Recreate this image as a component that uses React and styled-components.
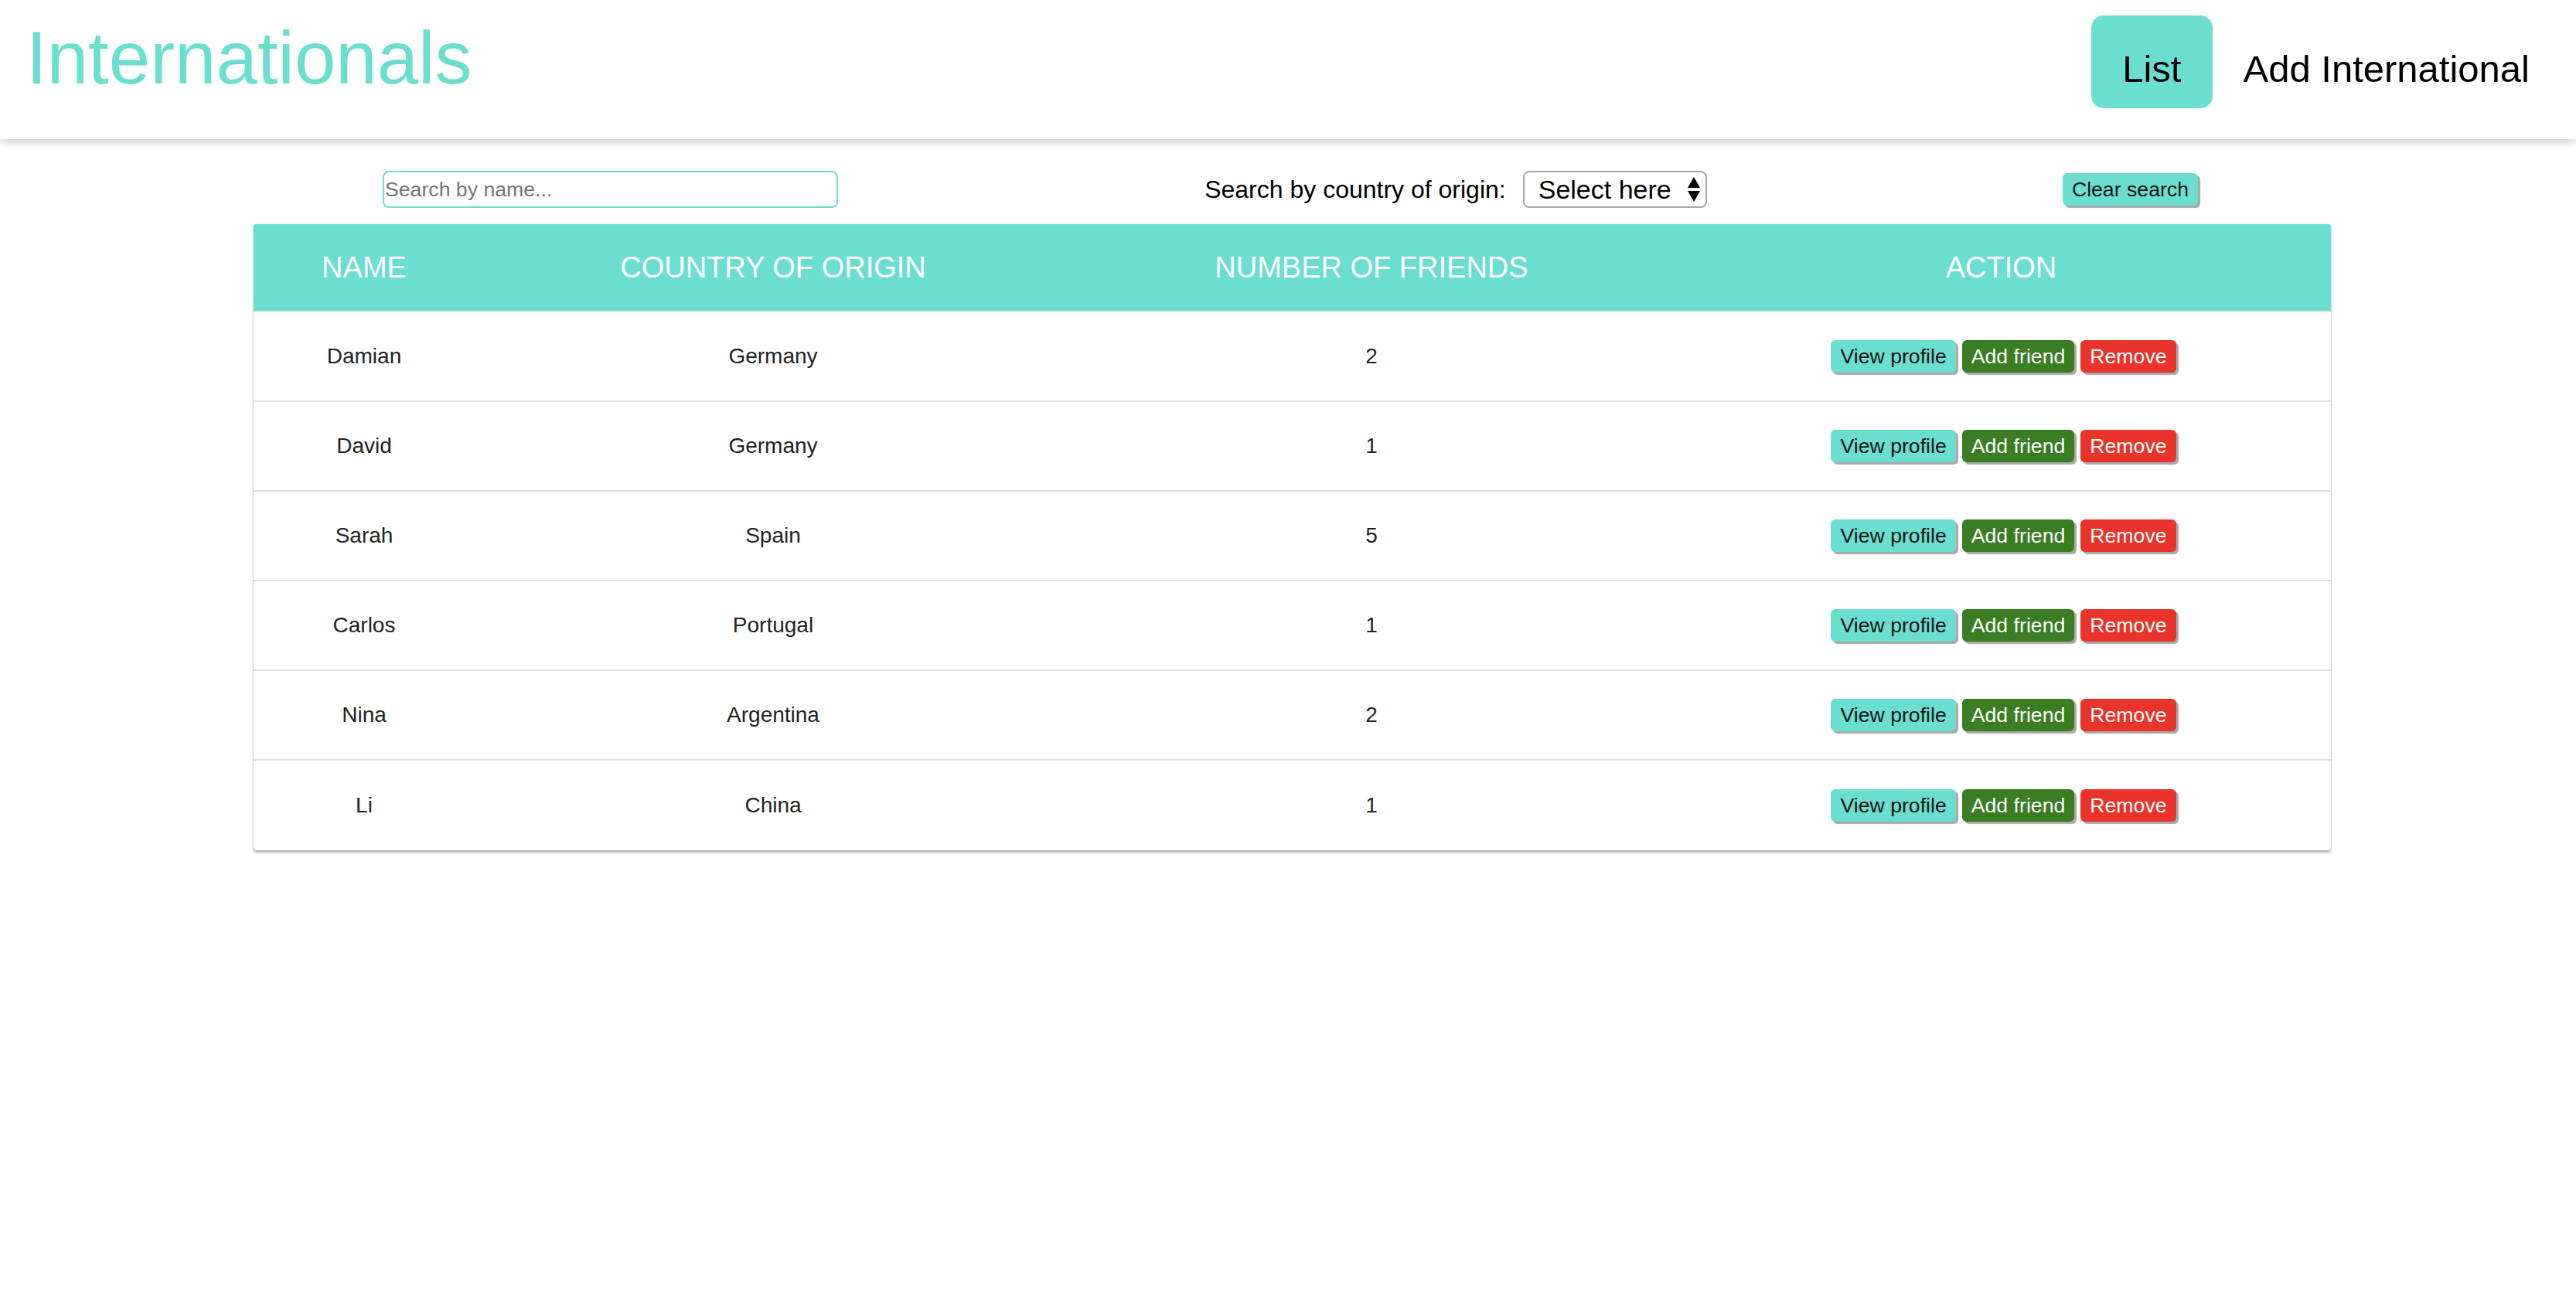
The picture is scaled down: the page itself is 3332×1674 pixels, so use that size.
import React from 'react'
import styled, { createGlobalStyle } from 'styled-components'

const teal = '#6adecf'

const GlobalStyle = createGlobalStyle`
    html, body {
        margin: 0;
        min-height: 100%;
        background: #fff;
        font-family: "Liberation Sans", Arial, Helvetica, sans-serif;
    }
`

const internationals = [
    { name: 'Damian', country: 'Germany', friends: 2 },
    { name: 'David', country: 'Germany', friends: 1 },
    { name: 'Sarah', country: 'Spain', friends: 5 },
    { name: 'Carlos', country: 'Portugal', friends: 1 },
    { name: 'Nina', country: 'Argentina', friends: 2 },
    { name: 'Li', country: 'China', friends: 1 },
]

const colunas = [
    { nome: 'Name', tam: 286, var: 'name' },
    { nome: 'Country of origin', tam: 772, var: 'country' },
    { nome: 'Number of friends', tam: 776, var: 'friends' },
    { nome: 'Action', tam: 853 },
]

const Page = styled.div`
    min-height: 1600px;
`

const Header = styled.header`
    display: flex;
    justify-content: space-between;
    align-items: flex-start;
    height: 180px;
    box-sizing: border-box;
    padding: 20px 20px 0 34px;
    background: #fff;
    box-shadow: 0 4px 12px rgba(0, 0, 0, 0.2);
`

const Title = styled.h1`
    margin: 7px 0 0;
    font-size: 96px;
    line-height: 1;
    font-weight: normal;
    color: ${teal};
`

const Nav = styled.nav`
    display: flex;
`

const NavLink = styled.a`
    display: block;
    padding: 45px 40px 26px;
    font-size: 49px;
    line-height: 1;
    color: #000;
    text-decoration: none;
    border-radius: 16px;
    background: ${p => (p.active ? teal : 'transparent')};
`

const Main = styled.main`
    margin: 41px 317px 0 328px;
    padding-bottom: 60px;
`

const SearchBar = styled.div`
    display: flex;
    justify-content: space-between;
    align-items: center;
    padding: 0 172px 0 167px;
    margin-bottom: 21px;
`

const NameInput = styled.input`
    width: 589px;
    height: 48px;
    box-sizing: border-box;
    padding: 0 1px;
    border: 2px solid ${teal};
    border-radius: 8px;
    font-family: inherit;
    font-size: 26.67px;
    outline: none;
    &::placeholder {
        color: #757575;
    }
`

const CountryFilter = styled.label`
    display: flex;
    align-items: center;
    gap: 22px;
    margin-left: 14px;
    font-size: 32px;
    color: #000;
`

const SelectWrap = styled.div`
    position: relative;
    svg {
        position: absolute;
        right: 9px;
        top: 8px;
        pointer-events: none;
    }
`

const Select = styled.select`
    appearance: none;
    width: 238px;
    height: 48px;
    box-sizing: border-box;
    padding: 0 0 0 18px;
    border: 2px solid #a6a6a6;
    border-radius: 8px;
    background: #fff;
    font-family: inherit;
    font-size: 34px;
    color: #000;
`

const Button = styled.button`
    height: 42px;
    padding: 0 12px;
    border: none;
    border-radius: 6px;
    font-family: inherit;
    font-size: 26.67px;
    color: ${p => (p.dark ? '#fff' : '#111')};
    background: ${p => p.bg || teal};
    box-shadow: 3px 3px 1px #a9a9a9;
    cursor: pointer;
`

const TableCard = styled.div`
    border-radius: 4px;
    overflow: hidden;
    background: #fff;
    box-shadow: 0 3px 3px rgba(0, 0, 0, 0.28), 0 0 2px rgba(0, 0, 0, 0.18);
`

const Table = styled.table`
    width: 100%;
    table-layout: fixed;
    border-collapse: separate;
    border-spacing: 0;
`

const Th = styled.th`
    height: 112px;
    padding: 0;
    background: ${teal};
    color: #fff;
    font-size: 38px;
    font-weight: normal;
    text-transform: uppercase;
    border-bottom: 2px solid #e0e0e0;
`

const Td = styled.td`
    height: 114px;
    padding: 0;
    text-align: center;
    font-size: 28px;
    color: #222;
    border-bottom: 2px solid #e0e0e0;
    tr:last-child & {
        height: 116px;
        border-bottom: none;
    }
`

const Actions = styled.div`
    display: flex;
    justify-content: center;
    gap: 8px;
    padding-left: 6px;
`

const SelectArrows = () => (
    <svg width="16" height="32" viewBox="0 0 16 32">
        <polygon points="8,0 16,14 0,14" fill="#000" />
        <polygon points="0,18 16,18 8,32" fill="#000" />
    </svg>
)

export default function App() {
    return (
        <Page>
            <GlobalStyle />
            <Header>
                <Title>Internationals</Title>
                <Nav>
                    <NavLink href="#" active>List</NavLink>
                    <NavLink href="#">Add International</NavLink>
                </Nav>
            </Header>
            <Main>
                <SearchBar>
                    <NameInput placeholder="Search by name..." />
                    <CountryFilter>
                        Search by country of origin:
                        <SelectWrap>
                            <Select defaultValue="">
                                <option value="">Select here</option>
                                <option>Germany</option>
                                <option>Spain</option>
                                <option>Portugal</option>
                                <option>Argentina</option>
                                <option>China</option>
                            </Select>
                            <SelectArrows />
                        </SelectWrap>
                    </CountryFilter>
                    <Button>Clear search</Button>
                </SearchBar>
                <TableCard>
                    <Table>
                        <colgroup>
                            {colunas.map((c, i) => <col key={i} style={{ width: c.tam }} />)}
                        </colgroup>
                        <thead>
                            <tr>
                                {colunas.map((c, i) => <Th key={i}>{c.nome}</Th>)}
                            </tr>
                        </thead>
                        <tbody>
                            {internationals.map((e, i) => (
                                <tr key={i}>
                                    <Td>{e.name}</Td>
                                    <Td>{e.country}</Td>
                                    <Td>{e.friends}</Td>
                                    <Td>
                                        <Actions>
                                            <Button>View profile</Button>
                                            <Button dark bg="#3a7d22">Add friend</Button>
                                            <Button dark bg="#e8342a">Remove</Button>
                                        </Actions>
                                    </Td>
                                </tr>
                            ))}
                        </tbody>
                    </Table>
                </TableCard>
            </Main>
        </Page>
    )
}
